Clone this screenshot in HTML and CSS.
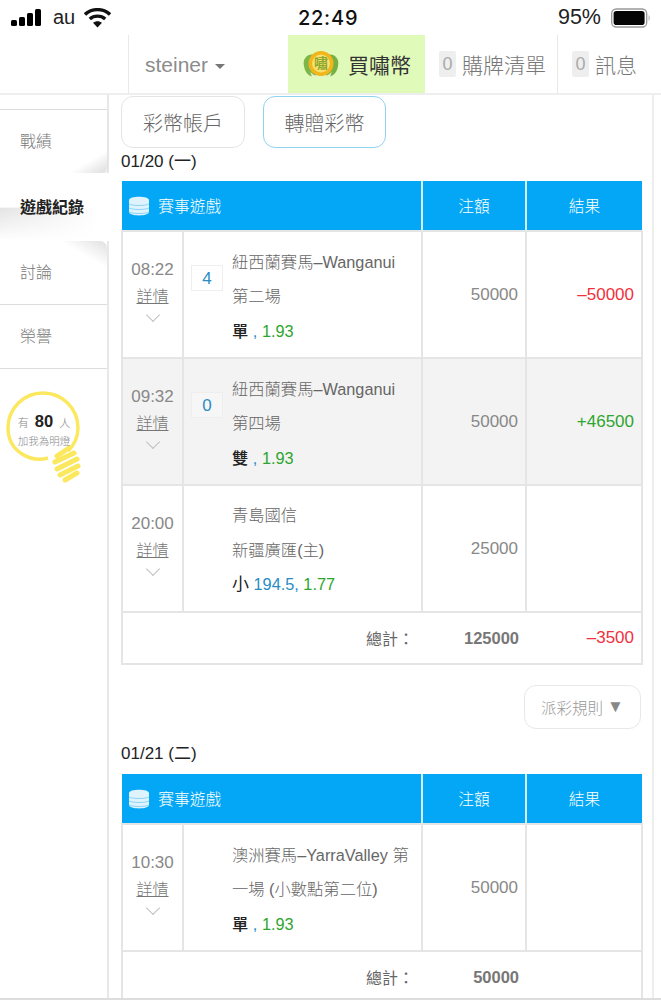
FILE: index.html
```html
<!DOCTYPE html>
<html lang="zh-Hant">
<head>
    <meta charset="UTF-8">
    <meta name="viewport" content="width=device-width, initial-scale=1.0">
    <title>遊戲紀錄</title>
    <link rel="stylesheet" href="styles.css">
</head>
<body>
<div class="phone">
    <!-- iOS status bar -->
    <div class="status-bar">
        <div class="status-left">
            <svg class="signal" width="30" height="18" viewBox="0 0 30 18">
                <rect x="0" y="11" width="6" height="6" rx="1.5"/>
                <rect x="8" y="8" width="6" height="9" rx="1.5"/>
                <rect x="16" y="4" width="6" height="13" rx="1.5"/>
                <rect x="24" y="0" width="6" height="17" rx="1.5"/>
            </svg>
            <span class="carrier">au</span>
            <svg class="wifi" width="27" height="20" viewBox="0 0 27 20">
                <path d="M1 6.5 C8 0 19 0 26 6.5" fill="none" stroke="#111" stroke-width="3.4"/>
                <path d="M5.8 11 C10 7.2 17 7.2 21.2 11" fill="none" stroke="#111" stroke-width="3.4"/>
                <path d="M13.5 19.5 L9 14.8 C11.5 12.7 15.5 12.7 18 14.8 Z" fill="#111"/>
            </svg>
        </div>
        <div class="status-time">22:49</div>
        <div class="status-right">
            <span>95%</span>
            <svg width="40" height="20" viewBox="0 0 40 20">
                <rect x="0.7" y="1" width="35" height="18" rx="4.5" fill="none" stroke="#999" stroke-width="1.3"/>
                <rect x="2.6" y="3" width="31" height="14" rx="2.8" fill="#050505"/>
                <path d="M37.6 7 C39 7.5 39 12.5 37.6 13 Z" fill="#aaa"/>
            </svg>
        </div>
    </div>

    <!-- top nav -->
    <div class="top-nav">
        <div class="nav-spacer"></div>
        <div class="nav-user">steiner <span class="caret"></span></div>
        <div class="nav-buy">
            <svg class="coin" width="38" height="30" viewBox="0 0 38 30">
                <path d="M2 17 C0 9 7 4 12 6 L14 27 C8 29 3 24 2 17 Z" fill="#7cb648"/>
                <path d="M36 17 C38 9 31 4 26 6 L24 27 C30 29 35 24 36 17 Z" fill="#79b044"/>
                <path d="M8 22 C11 29 27 29 30 22 L28 28 L10 28 Z" fill="#e4f2c4"/>
                <circle cx="19" cy="14.5" r="12.5" fill="#f2b51c"/>
                <circle cx="19" cy="14.5" r="9" fill="#f9e06a"/>
                <text x="19" y="19" text-anchor="middle" class="coin-text">嘯</text>
            </svg>
            <span>買嘯幣</span>
        </div>
        <div class="nav-item nav-cart"><span class="count">0</span> 購牌清單</div>
        <div class="nav-item nav-msg"><span class="count">0</span> 訊息</div>
    </div>

    <div class="layout">
        <!-- left menu -->
        <div class="side">
            <div class="side-top"></div>
            <div class="side-item side-before">戰績</div>
            <div class="side-item side-active">遊戲紀錄</div>
            <div class="side-item side-after">討論</div>
            <div class="side-item side-plain">榮譽</div>
            <div class="bulb">
                <svg class="bulb-art" width="84" height="102" viewBox="0 0 84 102">
                    <path d="M48 74 C30 79 8 67 8 44 C8 24 24 9 43 9 C62 9 78 24 78 44 C78 54 74 61 68 67" fill="none" stroke="#fbe85e" stroke-width="3.4"/>
                    <g stroke="#fbe85e" stroke-width="5" stroke-linecap="round">
                        <path d="M57 72 L69 64"/>
                        <path d="M55 78 L74 69"/>
                        <path d="M57 85 L77 75"/>
                        <path d="M60 91 L78 82"/>
                        <path d="M65 96 L77 89"/>
                    </g>
                </svg>
                <div class="bulb-text">
                    <div class="bulb-line">有 <b>80</b> 人</div>
                    <div class="bulb-sub">加我為明燈</div>
                </div>
            </div>
        </div>

        <!-- main -->
        <div class="main">
            <div class="tabs">
                <div class="tab">彩幣帳戶</div>
                <div class="tab tab-on">轉贈彩幣</div>
            </div>

            <div class="day-title">01/20 (一)</div>
            <table class="game-table">
                <colgroup><col class="c-time"><col class="c-game"><col class="c-bet"><col class="c-res"></colgroup>
                <tr class="head">
                    <th colspan="2" class="head-game">
                        <svg width="20" height="20" viewBox="0 0 20 20"><path d="M0 4 C0 -0.5 20 -0.5 20 4 L20 16 C20 20.5 0 20.5 0 16 Z" fill="#dff3fd"/><path d="M0 8 C4 10 16 10 20 8 M0 12 C4 14 16 14 20 12 M0 16 C4 18 16 18 20 16" fill="none" stroke="#8ed4f7" stroke-width="1"/></svg>
                        賽事遊戲
                    </th>
                    <th>注額</th>
                    <th>結果</th>
                </tr>
                <tr>
                    <td class="time">08:22<a class="detail">詳情</a><i class="chev"></i></td>
                    <td class="game">
                        <div class="game-wrap">
                            <span class="badge">4</span>
                            <div class="lines">
                                <div>紐西蘭賽馬–Wanganui</div>
                                <div>第二場</div>
                                <div><span class="pick">單</span><span class="sep"> , </span><span class="odds">1.93</span></div>
                            </div>
                        </div>
                    </td>
                    <td class="num">50000</td>
                    <td class="num red">–50000</td>
                </tr>
                <tr class="alt">
                    <td class="time">09:32<a class="detail">詳情</a><i class="chev"></i></td>
                    <td class="game">
                        <div class="game-wrap">
                            <span class="badge">0</span>
                            <div class="lines">
                                <div>紐西蘭賽馬–Wanganui</div>
                                <div>第四場</div>
                                <div><span class="pick">雙</span><span class="sep"> , </span><span class="odds">1.93</span></div>
                            </div>
                        </div>
                    </td>
                    <td class="num">50000</td>
                    <td class="num green">+46500</td>
                </tr>
                <tr>
                    <td class="time">20:00<a class="detail">詳情</a><i class="chev"></i></td>
                    <td class="game">
                        <div class="game-wrap">
                            <span class="badge badge-none"></span>
                            <div class="lines">
                                <div>青島國信</div>
                                <div>新疆廣匯(主)</div>
                                <div><span class="pick pick-size">小</span> <span class="sep">194.5,</span> <span class="odds">1.77</span></div>
                            </div>
                        </div>
                    </td>
                    <td class="num">25000</td>
                    <td class="num"></td>
                </tr>
                <tr class="total">
                    <td colspan="2" class="total-label">總計：</td>
                    <td class="num strong">125000</td>
                    <td class="num red">–3500</td>
                </tr>
            </table>

            <div class="rule-row"><div class="rule-btn">派彩規則 <span class="rule-arrow">▼</span></div></div>

            <div class="day-title day-two">01/21 (二)</div>
            <table class="game-table">
                <colgroup><col class="c-time"><col class="c-game"><col class="c-bet"><col class="c-res"></colgroup>
                <tr class="head">
                    <th colspan="2" class="head-game">
                        <svg width="20" height="20" viewBox="0 0 20 20"><path d="M0 4 C0 -0.5 20 -0.5 20 4 L20 16 C20 20.5 0 20.5 0 16 Z" fill="#dff3fd"/><path d="M0 8 C4 10 16 10 20 8 M0 12 C4 14 16 14 20 12 M0 16 C4 18 16 18 20 16" fill="none" stroke="#8ed4f7" stroke-width="1"/></svg>
                        賽事遊戲
                    </th>
                    <th>注額</th>
                    <th>結果</th>
                </tr>
                <tr>
                    <td class="time">10:30<a class="detail">詳情</a><i class="chev"></i></td>
                    <td class="game">
                        <div class="game-wrap">
                            <span class="badge badge-none"></span>
                            <div class="lines">
                                <div>澳洲賽馬–YarraValley 第</div>
                                <div>一場 (小數點第二位)</div>
                                <div><span class="pick">單</span><span class="sep"> , </span><span class="odds">1.93</span></div>
                            </div>
                        </div>
                    </td>
                    <td class="num">50000</td>
                    <td class="num"></td>
                </tr>
                <tr class="total">
                    <td colspan="2" class="total-label">總計：</td>
                    <td class="num strong">50000</td>
                    <td class="num"></td>
                </tr>
            </table>
        </div>
    </div>
</div>
</body>
</html>
```

FILE: styles.css
```css
body { margin: 0; background-color: #fff; font-family: "Liberation Sans", "Noto Sans CJK TC", sans-serif; color: #777; }
.phone { height: 1000px; display: flex; flex-direction: column; overflow: hidden; box-sizing: border-box; border-bottom: 2px solid #ddd; }

/* status bar */
.status-bar { height: 35px; flex: none; display: flex; align-items: center; justify-content: space-between; color: #111; font-size: 21.5px; }
.status-left { display: flex; align-items: center; padding-left: 11px; }
.carrier { margin-left: 12px; font-size: 20px; color: #222; }
.wifi { margin-left: 9px; }
.status-time { font-family: Inter, "Liberation Sans", sans-serif; font-weight: 500; font-size: 20px; letter-spacing: 0.8px; margin-left: -13px; }
.status-right { display: flex; align-items: center; gap: 10px; padding-right: 10px; color: #222; }

/* top nav */
.top-nav { height: 60px; flex: none; display: flex; border-bottom: 2px solid #eee; box-sizing: border-box; font-size: 21px; font-weight: 300; }
.nav-spacer { width: 128px; border-right: 1px solid #e8e8e8; }
.nav-user { width: 159px; padding: 2px 0 0 16px; box-sizing: border-box; display: flex; align-items: center; gap: 7px; color: #8c8c8c; }
.caret { width: 0; height: 0; border-left: 5px solid transparent; border-right: 5px solid transparent; border-top: 5px solid #777; margin-top: 2px; }
.nav-buy { width: 137px; background-color: #e0fab9; display: flex; align-items: center; gap: 8px; padding-left: 14px; box-sizing: border-box; color: #333; font-weight: 400; white-space: nowrap; }
.coin { flex: none; }
.coin-text { font-size: 14px; font-weight: bold; fill: #8aa832; }
.nav-item { display: flex; align-items: center; color: #777; white-space: nowrap; gap: 6px; box-sizing: border-box; padding-left: 14px; }
.nav-cart { width: 133px; border-right: 1px solid #e8e8e8; }
.nav-msg { flex: 1; }
.count { display: inline-block; background-color: #eee; color: #aaa; font-size: 18px; width: 17px; height: 26px; line-height: 26px; text-align: center; border-radius: 2px; }

/* page columns */
.layout { flex: 1; display: flex; min-height: 0; }

/* left menu */
.side { width: 109px; flex: none; border-right: 2px solid #e8e8e8; box-sizing: border-box; font-size: 16px; font-weight: 300; }
.side-top { height: 14px; border-bottom: 1px solid #ddd; }
.side-item { display: flex; align-items: center; padding: 0 0 3px 20px; box-sizing: border-box; color: #777; }
.side-before { height: 63px; border-bottom-right-radius: 6px; background: linear-gradient(to bottom right, #fff 82%, #ddd 100%); box-shadow: 1px 1px 2px #e2e2e2; }
.side-active { height: 68px; width: 109px; color: #222; font-weight: bold; background: linear-gradient(to bottom, #fff 50%, rgba(255,255,255,0) 52%, #fff 100%), linear-gradient(to right, #e4e4e4, #fff 90%); }
.side-after { height: 64px; border-top-right-radius: 7px; background: linear-gradient(to bottom left, #e0e0e0 0, #fff 22%); border-bottom: 1px solid #ddd; }
.side-plain { height: 64px; border-bottom: 1px solid #ddd; }

.bulb { display: grid; width: 84px; height: 102px; margin-top: 15px; }
.bulb-art, .bulb-text { grid-area: 1 / 1; }
.bulb-text { text-align: center; padding-top: 27px; margin-left: 1px; width: 86px; }
.bulb-line { font-size: 11px; line-height: 20px; color: #888; white-space: nowrap; }
.bulb-line b { font-size: 16.5px; font-weight: 700; color: #222; margin: 0 3px; }
.bulb-sub { font-size: 10.5px; line-height: 16px; color: #888; }

/* main area */
.main { width: 545px; flex: none; box-sizing: border-box; padding: 1px 11px 0 12px; border-right: 2px solid #eee; }
.tabs { display: flex; gap: 18px; height: 52px; }
.tab { width: 124px; height: 52px; box-sizing: border-box; border: 1px solid #e4e4e4; border-radius: 12px; font-size: 20px; font-weight: 300; color: #666; display: flex; align-items: center; justify-content: center; }
.tab-on { width: 123px; border-color: #8fd3f2; }
.day-title { font-size: 17px; line-height: 20px; color: #222; margin-top: 4px; height: 29px; }
.day-two { margin-top: 15px; height: 30px; }

.game-table { width: 520px; table-layout: fixed; border-collapse: collapse; font-size: 17px; }
.c-time { width: 61px; }
.c-game { width: 239px; }
.c-bet { width: 104px; }
.c-res { width: 116px; }
.game-table td { border: 2px solid #e5e5e5; box-sizing: border-box; }
.head th { height: 49px; background-color: #03a7f5; color: #fff; font-size: 15.7px; font-weight: 300; border-left: 2px solid #d5edf9; padding: 0; }
.head th:first-child { border-left: none; }
.head-game { text-align: left; }
.head-game svg { vertical-align: -4px; margin: 0 5px 0 7px; }

.game-table tr:not(.head):not(.total) td { height: 127px; }
.alt td { background-color: #f3f3f3; }
.time { text-align: center; padding: 0 0 7px; line-height: 26px; color: #888; }
.detail { display: block; text-decoration: underline; color: #777; font-size: 16px; font-weight: 300; line-height: 28px; }
.chev { display: block; width: 9px; height: 9px; border-right: 1.5px solid #c0c0c0; border-bottom: 1.5px solid #c0c0c0; transform: rotate(45deg); margin: -1px auto 6px; }

.game { padding: 4px 6px 0 7px; }
.game-wrap { display: flex; gap: 9px; }
.badge { flex: none; width: 32px; height: 26px; margin-top: 20px; box-sizing: border-box; background-color: #fff; border: 1px solid #eee; color: #2b8cc4; font-size: 17px; text-align: center; line-height: 25px; }
.alt .badge { background-color: #f6f6f6; }
.badge-none { visibility: hidden; }
.lines { font-size: 16.3px; font-weight: 300; line-height: 34.5px; color: #666; white-space: nowrap; }
.pick { color: #222; font-weight: 500; }
.pick-size { font-weight: 400; font-size: 17px; }
.sep { color: #2b8cc4; }
.odds { color: #2ea52e; }

.num { text-align: right; padding: 0 7px 0 0; color: #888; }
.red { color: #f0303c; }
.green { color: #2ea52e; }
.total td { height: 52px; border-left: none; border-right: none; }
.total td:first-child { border-left: 2px solid #e5e5e5; }
.total td:last-child { border-right: 2px solid #e5e5e5; }
.total-label { text-align: right; padding-right: 8px; color: #666; font-size: 16px; font-weight: 400; }
.strong { font-weight: bold; font-size: 16.5px; color: #777; }

.rule-row { display: flex; justify-content: flex-end; margin-top: 20px; }
.rule-btn { width: 117px; height: 44px; box-sizing: border-box; border: 1px solid #e8e8e8; border-radius: 12px; color: #999; font-size: 15.5px; font-weight: 300; display: flex; align-items: center; justify-content: center; gap: 4px; }
.rule-arrow { color: #888; font-size: 17px; }
```
